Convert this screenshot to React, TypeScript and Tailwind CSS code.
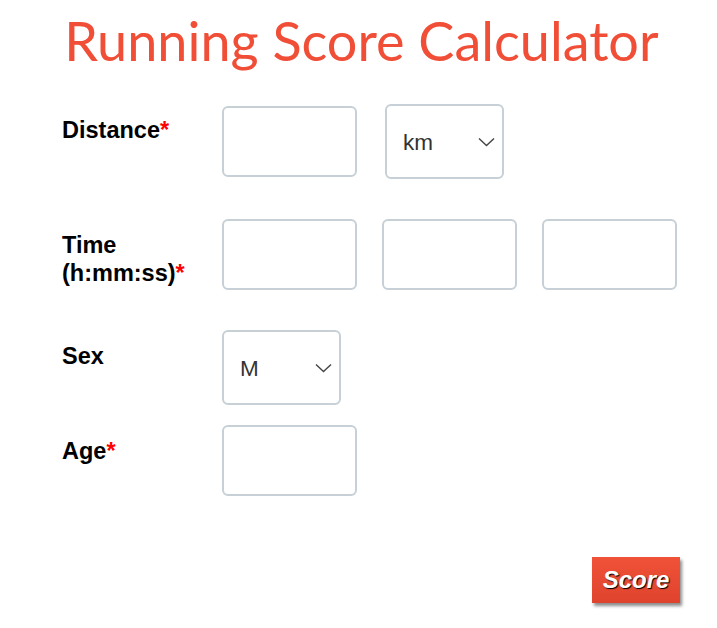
import { useState } from 'react';

const labelFont = { fontFamily: '"Liberation Sans", Arial, sans-serif' };

function Chevron() {
  return (
    <svg width="17" height="10" viewBox="0 0 17 10" className="pointer-events-none absolute right-[9px] top-1/2 -translate-y-1/2">
      <path d="M1 1.5 L8.5 8.5 L16 1.5" fill="none" stroke="#444" strokeWidth="1.4" />
    </svg>
  );
}

function TextBox() {
  return (
    <input
      type="text"
      className="h-[71px] w-[135px] rounded-[6px] border-2 border-[#c6d0d6] bg-white px-3 text-[20px] outline-none"
    />
  );
}

function Select({ value, options, width }: { value: string; options: string[]; width: string }) {
  const [v, setV] = useState(value);
  return (
    <div className={`relative ${width}`}>
      <select
        value={v}
        onChange={(e) => setV(e.target.value)}
        className="h-[75px] w-full appearance-none rounded-[6px] border-2 border-[#c6d0d6] bg-white pl-[16px] pt-[2px] text-[22.5px] text-[#333] outline-none"
        style={labelFont}
      >
        {options.map((o) => (
          <option key={o}>{o}</option>
        ))}
      </select>
      <Chevron />
    </div>
  );
}

function Label({ children, required }: { children: React.ReactNode; required?: boolean }) {
  return (
    <div className="mt-3 w-[160px] shrink-0 text-[23.5px] font-bold leading-[28px] text-black" style={labelFont}>
      {children}
      {required && <span className="text-[#ff0000]">*</span>}
    </div>
  );
}

export default function App() {
  return (
    <div className="min-h-[628px] w-[717px] bg-white">
      <h1
        className="pl-[6px] pt-[8px] text-center text-[54px] font-normal leading-[65px] text-[#f04e37]"
        style={{ fontFamily: 'Lato, sans-serif' }}
      >
        Running Score Calculator
      </h1>

      <form className="mt-[31px] pl-[62px]" onSubmit={(e) => e.preventDefault()}>
        <div className="flex items-start">
          <Label required>Distance</Label>
          <div className="flex items-center gap-[28px]">
            <TextBox />
            <Select value="km" options={['km', 'mi', 'm']} width="w-[119px]" />
          </div>
        </div>

        <div className="mt-[40px] flex items-start">
          <Label required>
            Time
            <br />
            (h:mm:ss)
          </Label>
          <div className="flex gap-[25px]">
            <TextBox />
            <TextBox />
            <TextBox />
          </div>
        </div>

        <div className="mt-[40px] flex items-start">
          <Label>Sex</Label>
          <Select value="M" options={['M', 'F']} width="w-[119px]" />
        </div>

        <div className="mt-[20px] flex items-start">
          <Label required>Age</Label>
          <TextBox />
        </div>

        <div className="mt-[61px] flex justify-end pr-[37px]">
          <button
            type="submit"
            className="h-[46px] w-[88px] bg-gradient-to-b from-[#ef5238] to-[#e0432d] text-[24px] font-bold italic text-white shadow-[2px_3px_3px_rgba(0,0,0,0.45)] [text-shadow:1px_1px_1px_#000]"
            style={labelFont}
          >
            Score
          </button>
        </div>
      </form>
    </div>
  );
}
